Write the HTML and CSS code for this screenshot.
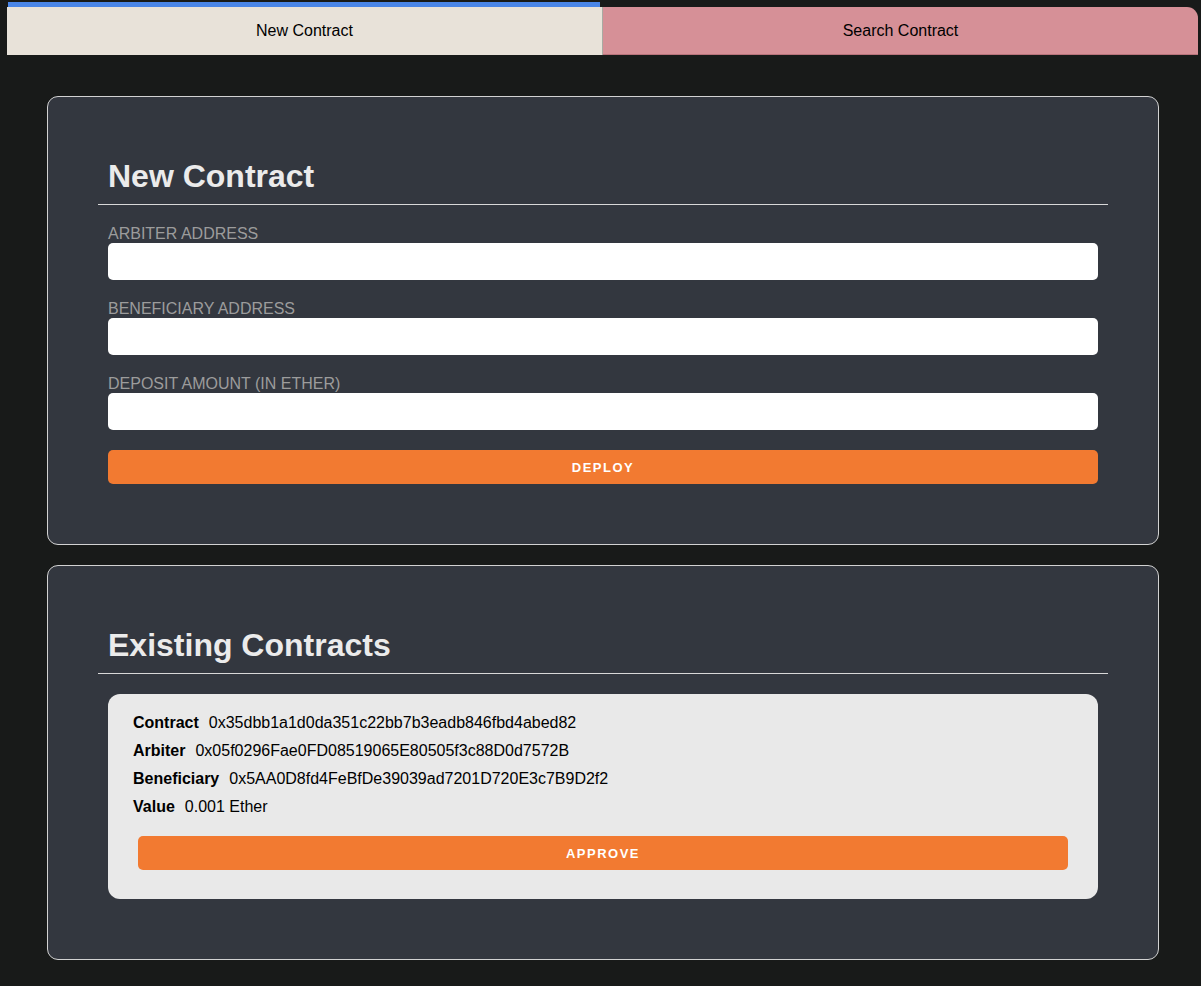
FILE: index.html
```html
<!DOCTYPE html>
<html lang="en">
<head>
<meta charset="utf-8">
<title>Escrow</title>
<link rel="stylesheet" href="styles.css">
</head>
<body>
<div class="tabs">
  <div class="tab active">New Contract</div>
  <div class="tab search">Search Contract</div>
</div>
<main class="main">
  <section class="card">
    <h1 class="card-title">New Contract</h1>
    <div class="form">
      <div class="field">
        <label class="field-label">Arbiter Address</label>
        <input class="field-input" type="text">
      </div>
      <div class="field">
        <label class="field-label">Beneficiary Address</label>
        <input class="field-input" type="text">
      </div>
      <div class="field">
        <label class="field-label">Deposit Amount (in Ether)</label>
        <input class="field-input" type="text">
      </div>
      <button class="btn deploy">Deploy</button>
    </div>
  </section>
  <section class="card">
    <h1 class="card-title">Existing Contracts</h1>
    <div class="contract-box">
      <div class="row"><b>Contract</b><span>0x35dbb1a1d0da351c22bb7b3eadb846fbd4abed82</span></div>
      <div class="row"><b>Arbiter</b><span>0x05f0296Fae0FD08519065E80505f3c88D0d7572B</span></div>
      <div class="row"><b>Beneficiary</b><span>0x5AA0D8fd4FeBfDe39039ad7201D720E3c7B9D2f2</span></div>
      <div class="row"><b>Value</b><span>0.001 Ether</span></div>
      <button class="btn approve">Approve</button>
    </div>
  </section>
</main>
</body>
</html>
```
FILE: styles.css
```css
html, body {
  margin: 0;
  background: #181a19;
}
body {
  font-family: "Liberation Sans", Arial, Helvetica, sans-serif;
  min-height: 986px;
}
.tabs {
  display: flex;
  margin: 7px 3px 0 7px;
  height: 48px;
}
.tab {
  flex: 1;
  display: flex;
  align-items: center;
  justify-content: center;
  font-size: 16px;
  color: #000;
  box-sizing: border-box;
}
.tab.active {
  background: #e8e2d9;
  border-right: 1px solid #a9aaa2;
  position: relative;
}
.tab.active::before {
  content: "";
  position: absolute;
  left: 1px;
  right: 2px;
  top: -5px;
  height: 5px;
  background: #4a86e8;
}
.tab.search {
  background: #d69097;
  border-top-right-radius: 11px;
  border-bottom: 1px solid #b8737b;
}
.main {
  padding: 41px 42px 4px 47px;
}
.card {
  background: #33373f;
  border: 1px solid #d2d2d2;
  border-radius: 11px;
  padding: 50px;
  margin-bottom: 20px;
}
.card-title {
  margin: 0;
  padding: 11px 10px 9px;
  font-size: 32px;
  line-height: 37px;
  font-weight: bold;
  color: #ebebeb;
  border-bottom: 1px solid #d8d8d8;
}
.form {
  padding: 0 10px 10px;
}
.field {
  margin-top: 19px;
}
.field-label {
  display: block;
  font-size: 16px;
  line-height: 19px;
  color: #9c9c9c;
  text-transform: uppercase;
}
.field-input {
  display: block;
  width: 100%;
  height: 37px;
  box-sizing: border-box;
  border: none;
  border-radius: 5px;
  background: #fff;
  margin: 0;
}
.btn {
  display: block;
  height: 34px;
  border: none;
  border-radius: 5px;
  background: #f27a31;
  color: #fff;
  font-family: "Liberation Sans", Arial, Helvetica, sans-serif;
  font-size: 13px;
  font-weight: bold;
  letter-spacing: 1.5px;
  text-transform: uppercase;
  padding: 0;
}
.deploy {
  width: 100%;
  margin-top: 20px;
}
.contract-box {
  margin: 20px 10px 10px;
  padding: 15px 25px 29px;
  background: #e9e9e9;
  border-radius: 12px;
  color: #000;
}
.row {
  display: flex;
  gap: 10px;
  font-size: 16px;
  line-height: 28px;
}
.row b {
  font-weight: bold;
}
.approve {
  width: calc(100% - 10px);
  margin: 15px 5px 0;
}
```
